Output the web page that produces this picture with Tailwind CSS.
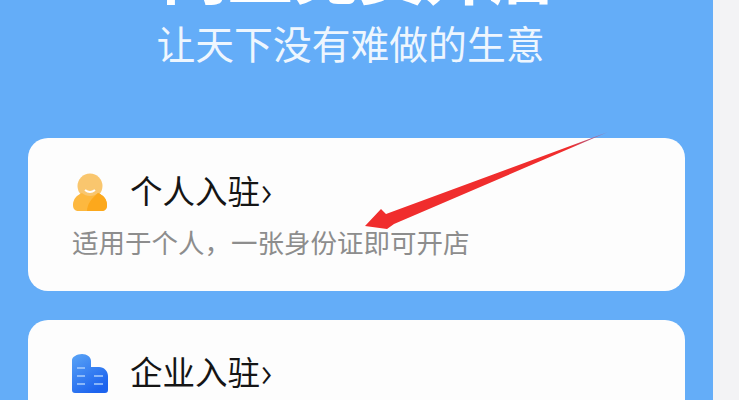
<!DOCTYPE html>
<html lang="zh">

<head>
    <meta charset="UTF-8">
    <meta name="viewport" content="width=device-width, initial-scale=1.0">
    <script src="https://cdn.jsdelivr.net/npm/@tailwindcss/browser@4"></script>
</head>

<body class="m-0 overflow-hidden bg-[#f3f3f5]">
    <div class="relative flex h-[400px] w-[739px] overflow-hidden font-['Noto_Sans_CJK_SC','Noto_Sans',sans-serif]">
        <!-- blue panel -->
        <div class="h-[400px] w-[713px] shrink-0 overflow-hidden bg-[#64adf8] px-[28px]">
            <div class="mt-[-61px] flex h-[64px] items-center justify-center pl-[4px] text-[65.5px] leading-[64px] font-bold text-white">网上免费开店</div>
            <div class="mt-[21px] flex h-[36px] items-center justify-center pr-[12px] text-[38.8px] leading-[36px] text-[#eef6fe]">让天下没有难做的生意</div>

            <!-- personal card -->
            <div class="mt-[78px] h-[153px] w-[657px] rounded-[20px] bg-[#fdfdfd] pt-[35px] pl-[44px]">
                <div class="flex h-[40px] items-center gap-[22px]">
                    <svg class="h-[40px] w-[36px]" viewBox="0 0 36 40">
                        <circle cx="18" cy="13" r="12.5" fill="#f9c66e" />
                        <path d="M1 32c0-6 4-10 9-12 2 2 5 3 8 3s6-1 8-3c5 2 9 6 9 12 0 4-2 6-6 6H7c-4 0-6-2-6-6z" fill="#fdb83f" />
                        <path d="M15 38c0-7 5-13 11-18 5 2 9 6 9 12 0 4-2 6-6 6z" fill="#fca81c" />
                        <path d="M13 17q5 4 10 0" stroke="#fff" stroke-width="2" fill="none" />
                    </svg>
                    <div class="mb-[6px] flex items-center text-[32.5px] leading-[40px] text-[#151515]">个人入驻<span class="ml-[1px] font-['Noto_Sans'] text-[42px] leading-[40px] font-light">›</span></div>
                </div>
                <div class="mt-[13px] text-[26.5px] leading-[32px] text-[#8d8d8d]">适用于个人，一张身份证即可开店</div>
            </div>

            <!-- company card -->
            <div class="mt-[29px] h-[153px] w-[657px] rounded-[20px] bg-[#fdfdfd] pt-[34px] pl-[44px]">
                <div class="flex h-[40px] items-center gap-[22px]">
                    <svg class="h-[40px] w-[36px]" viewBox="0 0 36 40">
                        <defs>
                            <linearGradient id="bld" x1="0" y1="0" x2="0.6" y2="1">
                                <stop offset="0" stop-color="#5aa4f6" />
                                <stop offset="1" stop-color="#1c63ee" />
                            </linearGradient>
                        </defs>
                        <path d="M0 6c0-3 5-6 10-6 5 0 9 3 9 7v6h8c5 0 9 4 9 9v14c0 2-1 3-3 3H3c-2 0-3-1-3-3z" fill="url(#bld)" />
                        <path d="M5 14h8M5 22h8M5 30h8M22 22h9M22 30h9" stroke="#a9cdfb" stroke-width="1.5" fill="none" />
                    </svg>
                    <div class="mb-[6px] flex items-center text-[32.5px] leading-[40px] text-[#151515]">企业入驻<span class="ml-[1px] font-['Noto_Sans'] text-[42px] leading-[40px] font-light">›</span></div>
                </div>
            </div>
        </div>

        <!-- annotation arrow on top of the screenshot -->
        <svg class="absolute top-0 left-0 h-[400px] w-[739px]" viewBox="0 0 739 400">
            <defs>
                <linearGradient id="tail" gradientUnits="userSpaceOnUse" x1="608" y1="132" x2="570" y2="148">
                    <stop offset="0" stop-color="#8a7fc0" />
                    <stop offset="1" stop-color="#f02d2d" />
                </linearGradient>
            </defs>
            <path d="M365 226L381 209L386 214L608 132L394 224L387 229z" fill="url(#tail)" />
        </svg>
    </div>
</body>

</html>
